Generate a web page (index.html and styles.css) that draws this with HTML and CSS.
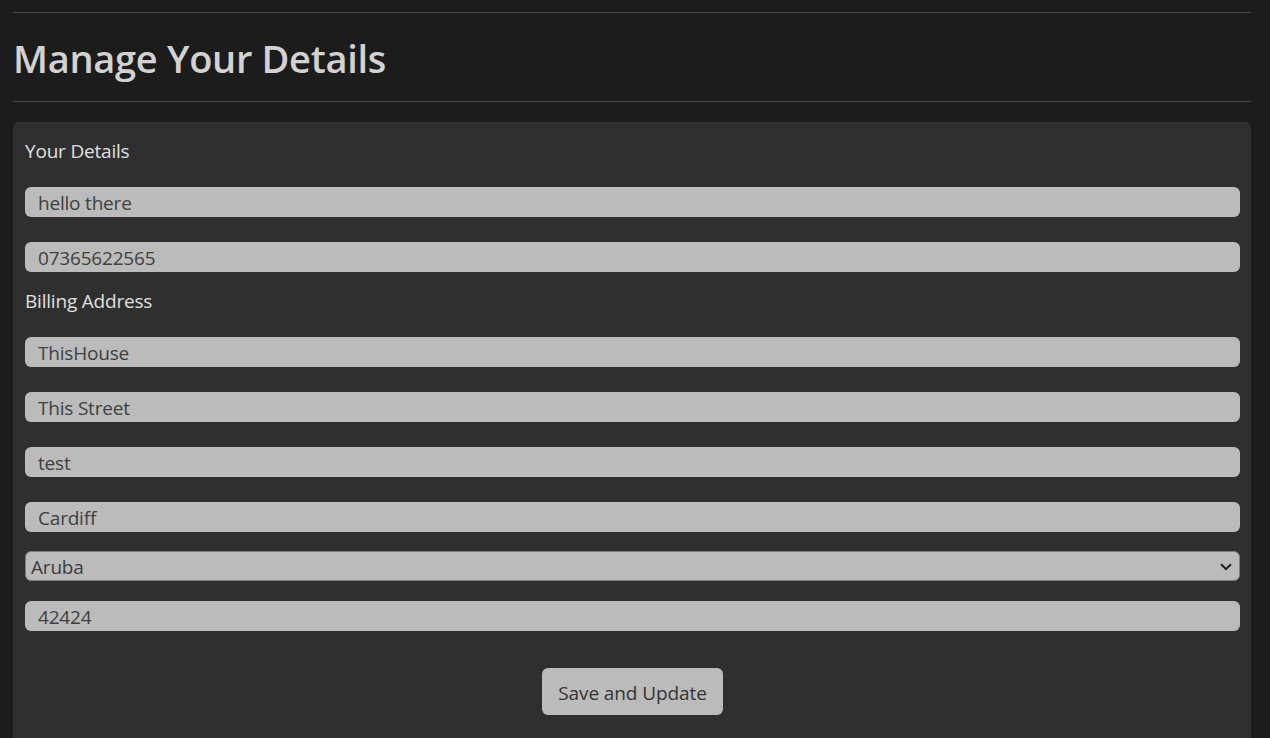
FILE: index.html
```html
<!DOCTYPE html>
<html lang="en">
<head>
<meta charset="utf-8">
<title>Manage Your Details</title>
<link rel="stylesheet" href="styles.css">
</head>
<body>
<main class="page">
  <hr class="rule">
  <h1 class="title">Manage Your Details</h1>
  <hr class="rule">
  <form class="card">
    <div class="section-label">Your Details</div>
    <input class="field" type="text" value="hello there">
    <input class="field field-gap" type="text" value="07365622565">
    <div class="section-label section-label-billing">Billing Address</div>
    <input class="field field-first" type="text" value="ThisHouse">
    <input class="field field-gap" type="text" value="This Street">
    <input class="field field-gap" type="text" value="test">
    <input class="field field-gap" type="text" value="Cardiff">
    <div class="select-wrap">
      <select class="select">
        <option>Aruba</option>
      </select>
      <svg class="chevron" viewBox="0 0 12 8" width="12" height="8" aria-hidden="true"><path d="M1 1.2 L6 6 L11 1.2" fill="none" stroke="#222" stroke-width="2"/></svg>
    </div>
    <input class="field field-post" type="text" value="42424">
    <div class="actions">
      <button class="btn" type="button">Save and Update</button>
    </div>
  </form>
</main>
</body>
</html>
```

FILE: styles.css
```css
html, body {
  margin: 0;
  padding: 0;
  background: #1c1c1c;
  height: 100%;
  overflow: hidden;
}

body {
  font-family: "Open Sans", "Noto Sans", "Liberation Sans", sans-serif;
  color: #e2e2e2;
}

.page {
  padding: 12px 19px 0 13px;
}

.rule {
  margin: 0;
  border: 0;
  border-top: 1px solid #474747;
  height: 0;
}

.title {
  margin: 0;
  height: 88px;
  display: flex;
  align-items: center;
  font-size: 38px;
  font-weight: 600;
  color: #d2d2d2;
  letter-spacing: -0.3px;
  padding-top: 2px;
  box-sizing: border-box;
}

.card {
  margin-top: 20px;
  background: #2f2f2f;
  border-radius: 5px;
  padding: 16px 11px 40px 12px;
  display: flex;
  flex-direction: column;
  min-height: 640px;
}

.section-label {
  font-size: 19px;
  line-height: 26px;
  color: #e0e0e0;
  letter-spacing: -0.2px;
  margin-bottom: 23px;
}

.section-label-billing {
  margin-top: 16px;
  margin-bottom: 23px;
}

.field {
  box-sizing: border-box;
  height: 30px;
  width: 100%;
  border: 0;
  border-radius: 6px;
  background: #bbbbbb;
  color: #404040;
  font-family: inherit;
  font-size: 19px;
  letter-spacing: -0.2px;
  padding: 2px 13px 0;
  outline: none;
  margin: 0;
}

.field-gap {
  margin-top: 25px;
}

.select-wrap {
  position: relative;
  margin-top: 19px;
}

.select {
  box-sizing: border-box;
  width: 100%;
  height: 30px;
  appearance: none;
  -webkit-appearance: none;
  background: #bbbbbb;
  border: 1px solid #7e7e7e;
  border-radius: 6px;
  color: #3b3b3b;
  font-family: inherit;
  font-size: 19px;
  letter-spacing: -0.2px;
  padding: 2px 5px 0;
  margin: 0;
  outline: none;
}

.chevron {
  position: absolute;
  right: 8px;
  top: 12px;
}

.field-post {
  margin-top: 20px;
}

.actions {
  display: flex;
  justify-content: center;
  margin-top: 37px;
}

.btn {
  box-sizing: border-box;
  width: 181px;
  height: 47px;
  border: 0;
  border-radius: 6px;
  background: #bbbbbb;
  color: #333333;
  font-family: inherit;
  font-size: 19px;
  letter-spacing: -0.1px;
  padding: 2px 0 0;
}
```
